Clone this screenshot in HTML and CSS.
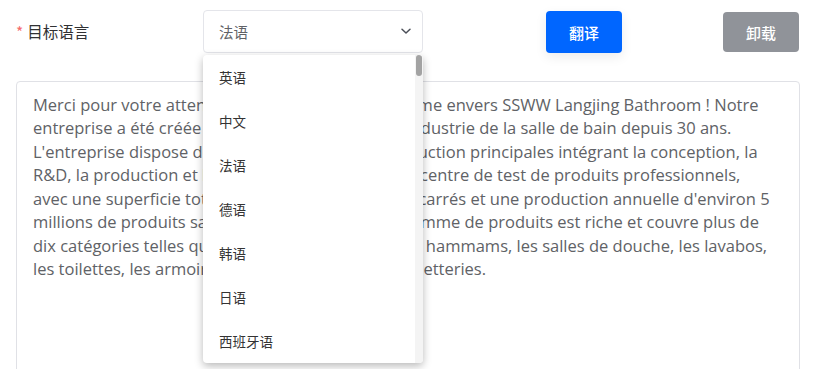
FILE: index.html
```html
<!DOCTYPE html>
<html>
<head>
    <title>翻译</title>
    <link rel="stylesheet" href="styles.css">
</head>
<body>
    <div class="page">
        <div class="toolbar">
            <label class="field-label" for="lang"><span class="required">*</span>目标语言</label>
            <div class="select">
                <div class="select-box" id="lang">
                    <span>法语</span>
                    <svg class="chevron" width="12" height="12" viewBox="0 0 12 12"><path d="M2 4.2 L6 8 L10 4.2" fill="none" stroke="#4b4f58" stroke-width="1.5" stroke-linecap="round" stroke-linejoin="round"/></svg>
                </div>
                <div class="dropdown">
                    <ul class="options">
                        <li>英语</li>
                        <li>中文</li>
                        <li>法语</li>
                        <li>德语</li>
                        <li>韩语</li>
                        <li>日语</li>
                        <li>西班牙语</li>
                    </ul>
                    <div class="scroll-track"><div class="scroll-thumb"></div></div>
                </div>
            </div>
            <button class="btn btn-primary">翻译</button>
            <button class="btn btn-gray">卸载</button>
        </div>

        <textarea class="result" readonly>Merci pour votre attention et à votre confiance ferme envers SSWW Langjing Bathroom ! Notre
entreprise a été créée en 1994 et se consacre à l'industrie de la salle de bain depuis 30 ans.
L'entreprise dispose déjà de quatre bases de production principales intégrant la conception, la
R&amp;D, la production et la vente, de même que d'un centre de test de produits professionnels,
avec une superficie totale de 1 000 000 de mètres carrés et une production annuelle d'environ 5
millions de produits sanitaires de qualité. Notre gamme de produits est riche et couvre plus de
dix catégories telles que les baignoires à bulles, les hammams, les salles de douche, les lavabos,
les toilettes, les armoires de salle de bain, les robinetteries.</textarea>
    </div>
</body>
</html>
```

FILE: styles.css
```css
body {
    margin: 0;
    background: #ffffff;
    font-family: "Open Sans", "Noto Sans CJK SC", sans-serif;
    color: #333;
}
.page {
    padding: 10px 20px 0 16px;
}
.toolbar {
    display: flex;
    align-items: center;
    height: 43px;
}
.field-label {
    width: 187px;
    font-family: "Noto Sans CJK SC", sans-serif;
    font-size: 15.5px;
    color: #303133;
    margin-top: -2px;
}
.required {
    color: #f56c6c;
    margin-right: 4px;
}
.select {
    position: relative;
    width: 220px;
}
.select-box {
    height: 43px;
    box-sizing: border-box;
    border: 1px solid #e4e5ea;
    border-radius: 4px;
    display: flex;
    align-items: center;
    justify-content: space-between;
    padding: 0 10px 0 15px;
    font-family: "Noto Sans CJK SC", sans-serif;
    font-size: 14.5px;
    color: #606266;
}
.chevron {
    margin-top: -2px;
}
.dropdown {
    position: absolute;
    top: 45px;
    left: 0;
    width: 220px;
    height: 308px;
    background: #fff;
    border-radius: 4px;
    box-shadow: 0 3px 8px rgba(0, 0, 0, 0.28);
    overflow: hidden;
    z-index: 5;
}
.options {
    list-style: none;
    margin: 0;
    padding: 0;
}
.options li {
    height: 44px;
    line-height: 44px;
    padding-left: 16px;
    font-family: "Noto Sans CJK SC", sans-serif;
    font-size: 13.5px;
    color: #333;
}
.scroll-track {
    position: absolute;
    top: 0;
    right: 0;
    width: 8px;
    height: 100%;
    background: #f4f4f4;
}
.scroll-thumb {
    margin: 0 1px;
    height: 21px;
    border-radius: 4px;
    background: #a3a3a3;
}
.btn {
    border: none;
    border-radius: 4px;
    width: 76px;
    font-family: "Noto Sans CJK SC", sans-serif;
    font-size: 15px;
    font-weight: 500;
    color: #fff;
    cursor: pointer;
}
.btn-primary {
    height: 42px;
    margin-left: 123px;
    margin-top: 1px;
    background: #0066ff;
    box-shadow: 0 4px 12px rgba(0, 0, 0, 0.08);
}
.btn-gray {
    height: 40px;
    margin-left: 101px;
    margin-top: 1px;
    background: #909399;
}
.result {
    display: block;
    box-sizing: border-box;
    width: 784px;
    height: 320px;
    margin-top: 28px;
    padding: 11px 16px;
    border: 1px solid #e0e1e6;
    border-radius: 4px;
    font-family: "Open Sans", sans-serif;
    font-size: 16.5px;
    line-height: 23.43px;
    color: #606266;
    resize: none;
    outline: none;
    white-space: pre;
    overflow: hidden;
}
```
